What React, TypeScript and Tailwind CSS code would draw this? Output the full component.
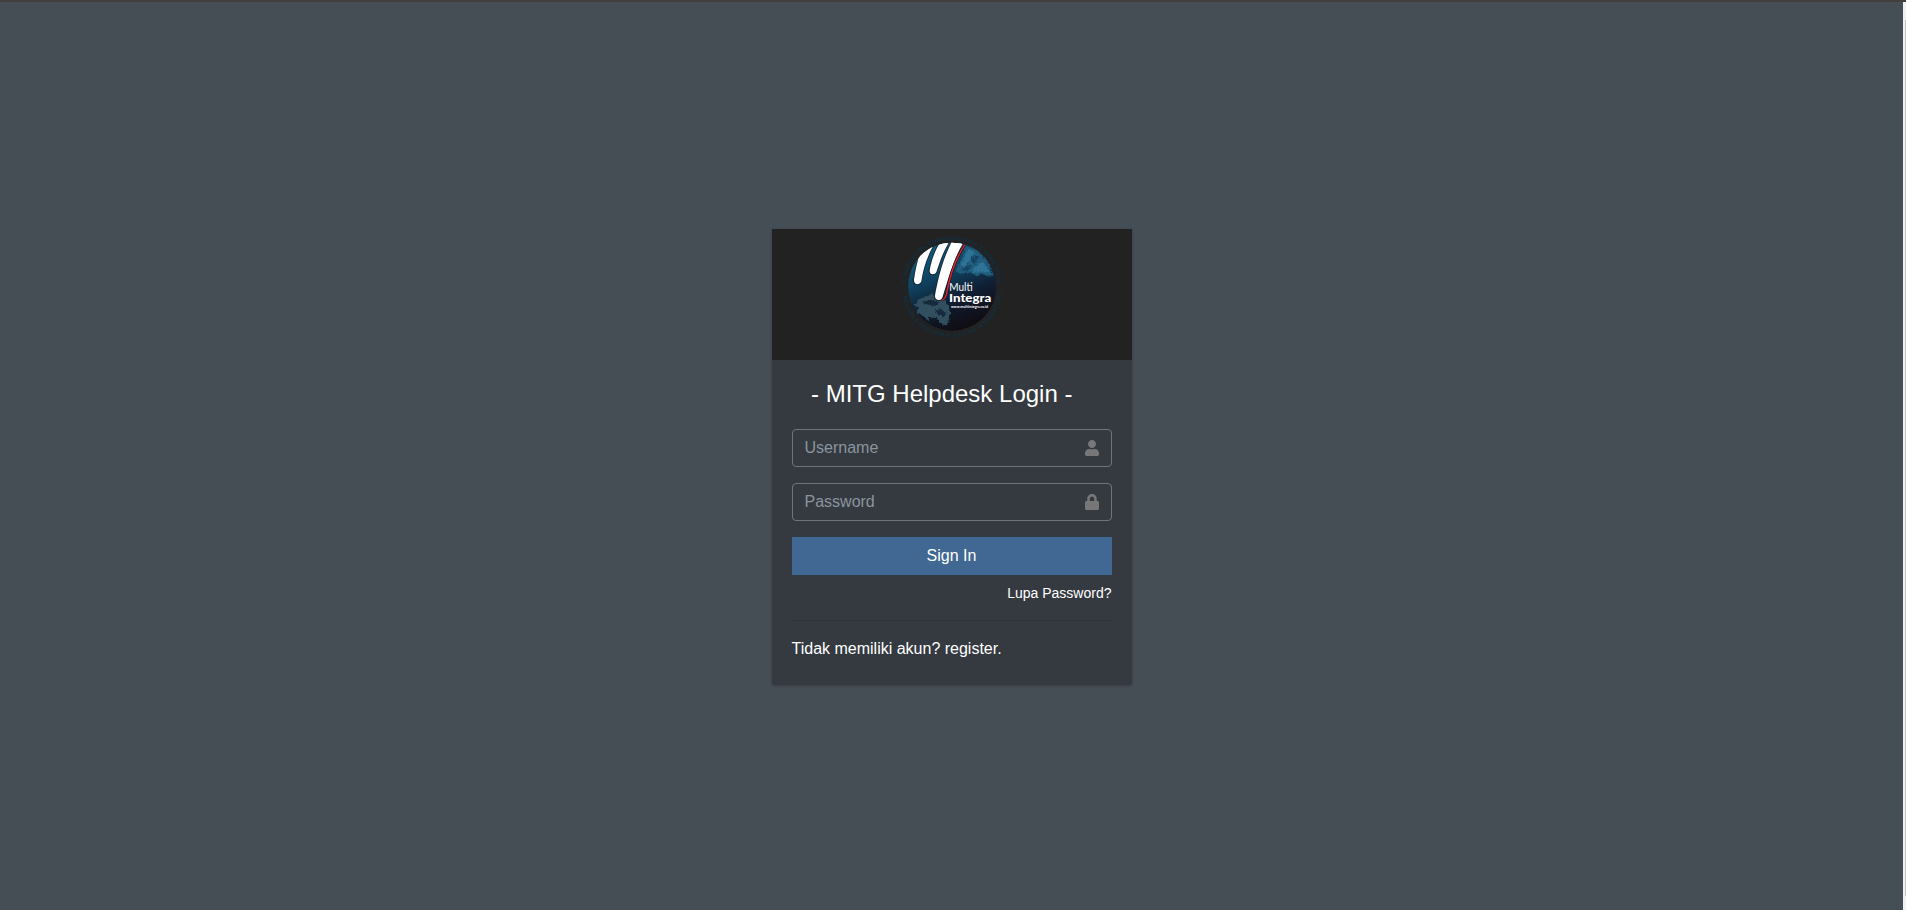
import React from 'react';
import { FaLock, FaUser } from 'react-icons/fa';

function Logo() {
  return (
    <svg viewBox="0 0 315 315" className="h-[105px] w-[105px]" aria-label="Multi Integra">
      <defs>
        <linearGradient id="globe" x1="0.25" y1="0" x2="0.65" y2="1">
          <stop offset="0" stopColor="#145c7c" />
          <stop offset="0.35" stopColor="#0f4462" />
          <stop offset="0.65" stopColor="#101d31" />
          <stop offset="1" stopColor="#0f0b10" />
        </linearGradient>
        <clipPath id="disc"><circle cx="156" cy="155" r="132" /></clipPath>
        <filter id="rough" x="-5%" y="-5%" width="110%" height="110%">
          <feTurbulence type="fractalNoise" baseFrequency="0.13" numOctaves="3" seed="4" result="n" />
          <feDisplacementMap in="SourceGraphic" in2="n" scale="12" xChannelSelector="R" yChannelSelector="G" />
        </filter>
        <path id="ringTop" d="M17 154a139 139 0 0 1 278 0" />
        <path id="ringBottom" d="M7 160a149 147 0 0 0 298 0" />
      </defs>
      <g fill="#113142" fontFamily="Liberation Sans, Arial, sans-serif" fontSize="16" fontWeight="700">
        <text><textPath href="#ringTop" startOffset="8" textLength="420">IT NAVIGATION, COMMUNICATION &amp; SIMULATION</textPath></text>
        <text><textPath href="#ringBottom" startOffset="24" textLength="420">RELIABLE PARTNER &amp; SYSTEM INTEGRATION</textPath></text>
        <circle cx="12" cy="166" r="3" />
        <circle cx="301" cy="166" r="3" />
      </g>
      <circle cx="156" cy="155" r="132" fill="url(#globe)" />
      <g clipPath="url(#disc)">
        <g filter="url(#rough)">
          <path d="M198 33L231 45 262 78 281 121 263 122 244 116 229 124 209 110 183 117 166 108 183 76Z" fill="#205b7c" />
          <path d="M205 42L222 49 207 79 188 97 180 93ZM238 85L249 82 260 96 270 116 246 108 225 114 214 107Z" fill="#2f7397" />
          <path d="M211 67L240 62 220 91ZM183 106L205 88 214 99 199 108Z" fill="#154363" />
          <path d="M43 210C58 189 80 178 103 178C126 181 145 204 151 225C151 242 148 258 141 271L125 268 110 250 83 245 92 259 77 252 63 238 47 234 58 218Z" fill="#33505f" />
          <path d="M65 200L92 194 119 203 108 212 81 210ZM104 226L125 221 141 235 132 244 114 240Z" fill="#142a3d" />
        </g>
        <g stroke="#3a7ea2" strokeWidth="2" opacity=".7" fill="none">
          <path d="M182 80L214 100M188 70L222 88M196 58L230 74M204 46L236 60M237 95v20M246 90v24M255 94v22" strokeDasharray="5 2" />
        </g>
        <g stroke="#162834" strokeWidth="5" strokeLinejoin="round">
          <path d="M100 15L66 42C52 78 46 106 41 134Q40 148 53 149Q62 148 64 139C69 103 80 68 99 34Z" fill="white" />
          <path d="M122 10H149L143 27C127 56 118 84 110 109Q107 119 98 119Q87 117 88 106C94 78 103 51 116 29Z" fill="white" />
          <path d="M158 10H194L187 27C162 70 146 127 127 188Q124 197 115 196Q104 194 104 182C112 142 126 79 152 27Z" fill="white" />
        </g>
        <g fill="white">
          <path d="M100 15L62 48C52 78 46 106 42 134Q42 147 53 148Q62 147 64 139C69 103 80 68 99 34Z" />
          <path d="M122 10H149L144 27C127 56 118 84 110 109Q107 118 98 118Q88 116 89 106C94 78 103 51 116 29Z" />
          <path d="M158 10H194L188 27C162 70 146 127 127 188Q124 196 115 195Q105 193 105 182C112 142 126 79 152 27Z" />
        </g>
        <path d="M194 30C164 75 147 133 139 179Q136 190 128 196" fill="none" stroke="#261923" strokeWidth="8" />
        <path d="M194 30C164 75 147 133 139 179Q136 190 128 196" fill="none" stroke="#eb2028" strokeWidth="4" />
      </g>
      <g fill="white" fontFamily="Lato, Liberation Sans, sans-serif">
        <text x="148" y="168" fontSize="34" textLength="70" lengthAdjust="spacingAndGlyphs">Multi</text>
        <text x="147" y="200" fontSize="34" fontWeight="900" textLength="127" lengthAdjust="spacingAndGlyphs">Integra</text>
        <text x="153" y="220" fontSize="13" fontWeight="700" textLength="111" lengthAdjust="spacingAndGlyphs">www.multiintegra.co.id</text>
      </g>
    </svg>
  );
}

interface FieldProps {
  type: string;
  placeholder: string;
  icon: React.ReactNode;
}

function Field({ type, placeholder, icon }: FieldProps) {
  return (
    <label className="mb-4 flex h-[38px] items-center rounded border border-[#6c757d] pr-[11px] pl-[11.5px] text-[#777]">
      <input
        type={type}
        placeholder={placeholder}
        className="h-full min-w-0 flex-1 bg-transparent text-base text-white outline-none placeholder:text-[#8b949d]"
      />
      {icon}
    </label>
  );
}

export default function App() {
  return (
    <div className="flex h-[910px] flex-col overflow-hidden bg-[#454d55] font-['Liberation_Sans',Arial,sans-serif] text-base text-white">
      <div className="h-[2px] shrink-0 bg-[#433f3e]" />
      <div className="flex min-h-0 flex-1">
        <main className="flex flex-1 items-start justify-center pt-[227px] pl-px">
          <section className="h-[456px] w-[360px] rounded-b-xs bg-[#343a40] shadow-[0_0_1px_rgba(0,0,0,.13),0_1px_3px_rgba(0,0,0,.2)]">
            <header className="flex h-[131px] justify-center bg-[#222] pt-[6px] pl-px">
              <Logo />
            </header>
            <div className="px-5 pt-[19px]">
              <h1 className="mb-[21px] pl-[19px] text-2xl leading-[29px] whitespace-nowrap">- MITG Helpdesk Login -</h1>
              <form onSubmit={(e) => e.preventDefault()}>
                <Field type="text" placeholder="Username" icon={<FaUser className="size-4" />} />
                <Field type="password" placeholder="Password" icon={<FaLock className="size-4" />} />
                <button type="submit" className="block h-[38px] w-full bg-[#406892] pr-px">Sign In</button>
              </form>
              <div className="mt-2 pr-[0.5px] text-right text-sm leading-5">
                <a href="#">Lupa Password?</a>
              </div>
              <hr className="mt-[17px] mb-4 border-[#2f3436]" />
              <p className="-ml-[0.5px] leading-6">Tidak memiliki akun? <a href="#">register.</a></p>
            </div>
          </section>
        </main>
        <div className="flex w-[3px] justify-end bg-[#f1f1f1] pt-[18px]">
          <div className="h-[876px] w-px bg-[#c1c1c1]" />
        </div>
      </div>
    </div>
  );
}
